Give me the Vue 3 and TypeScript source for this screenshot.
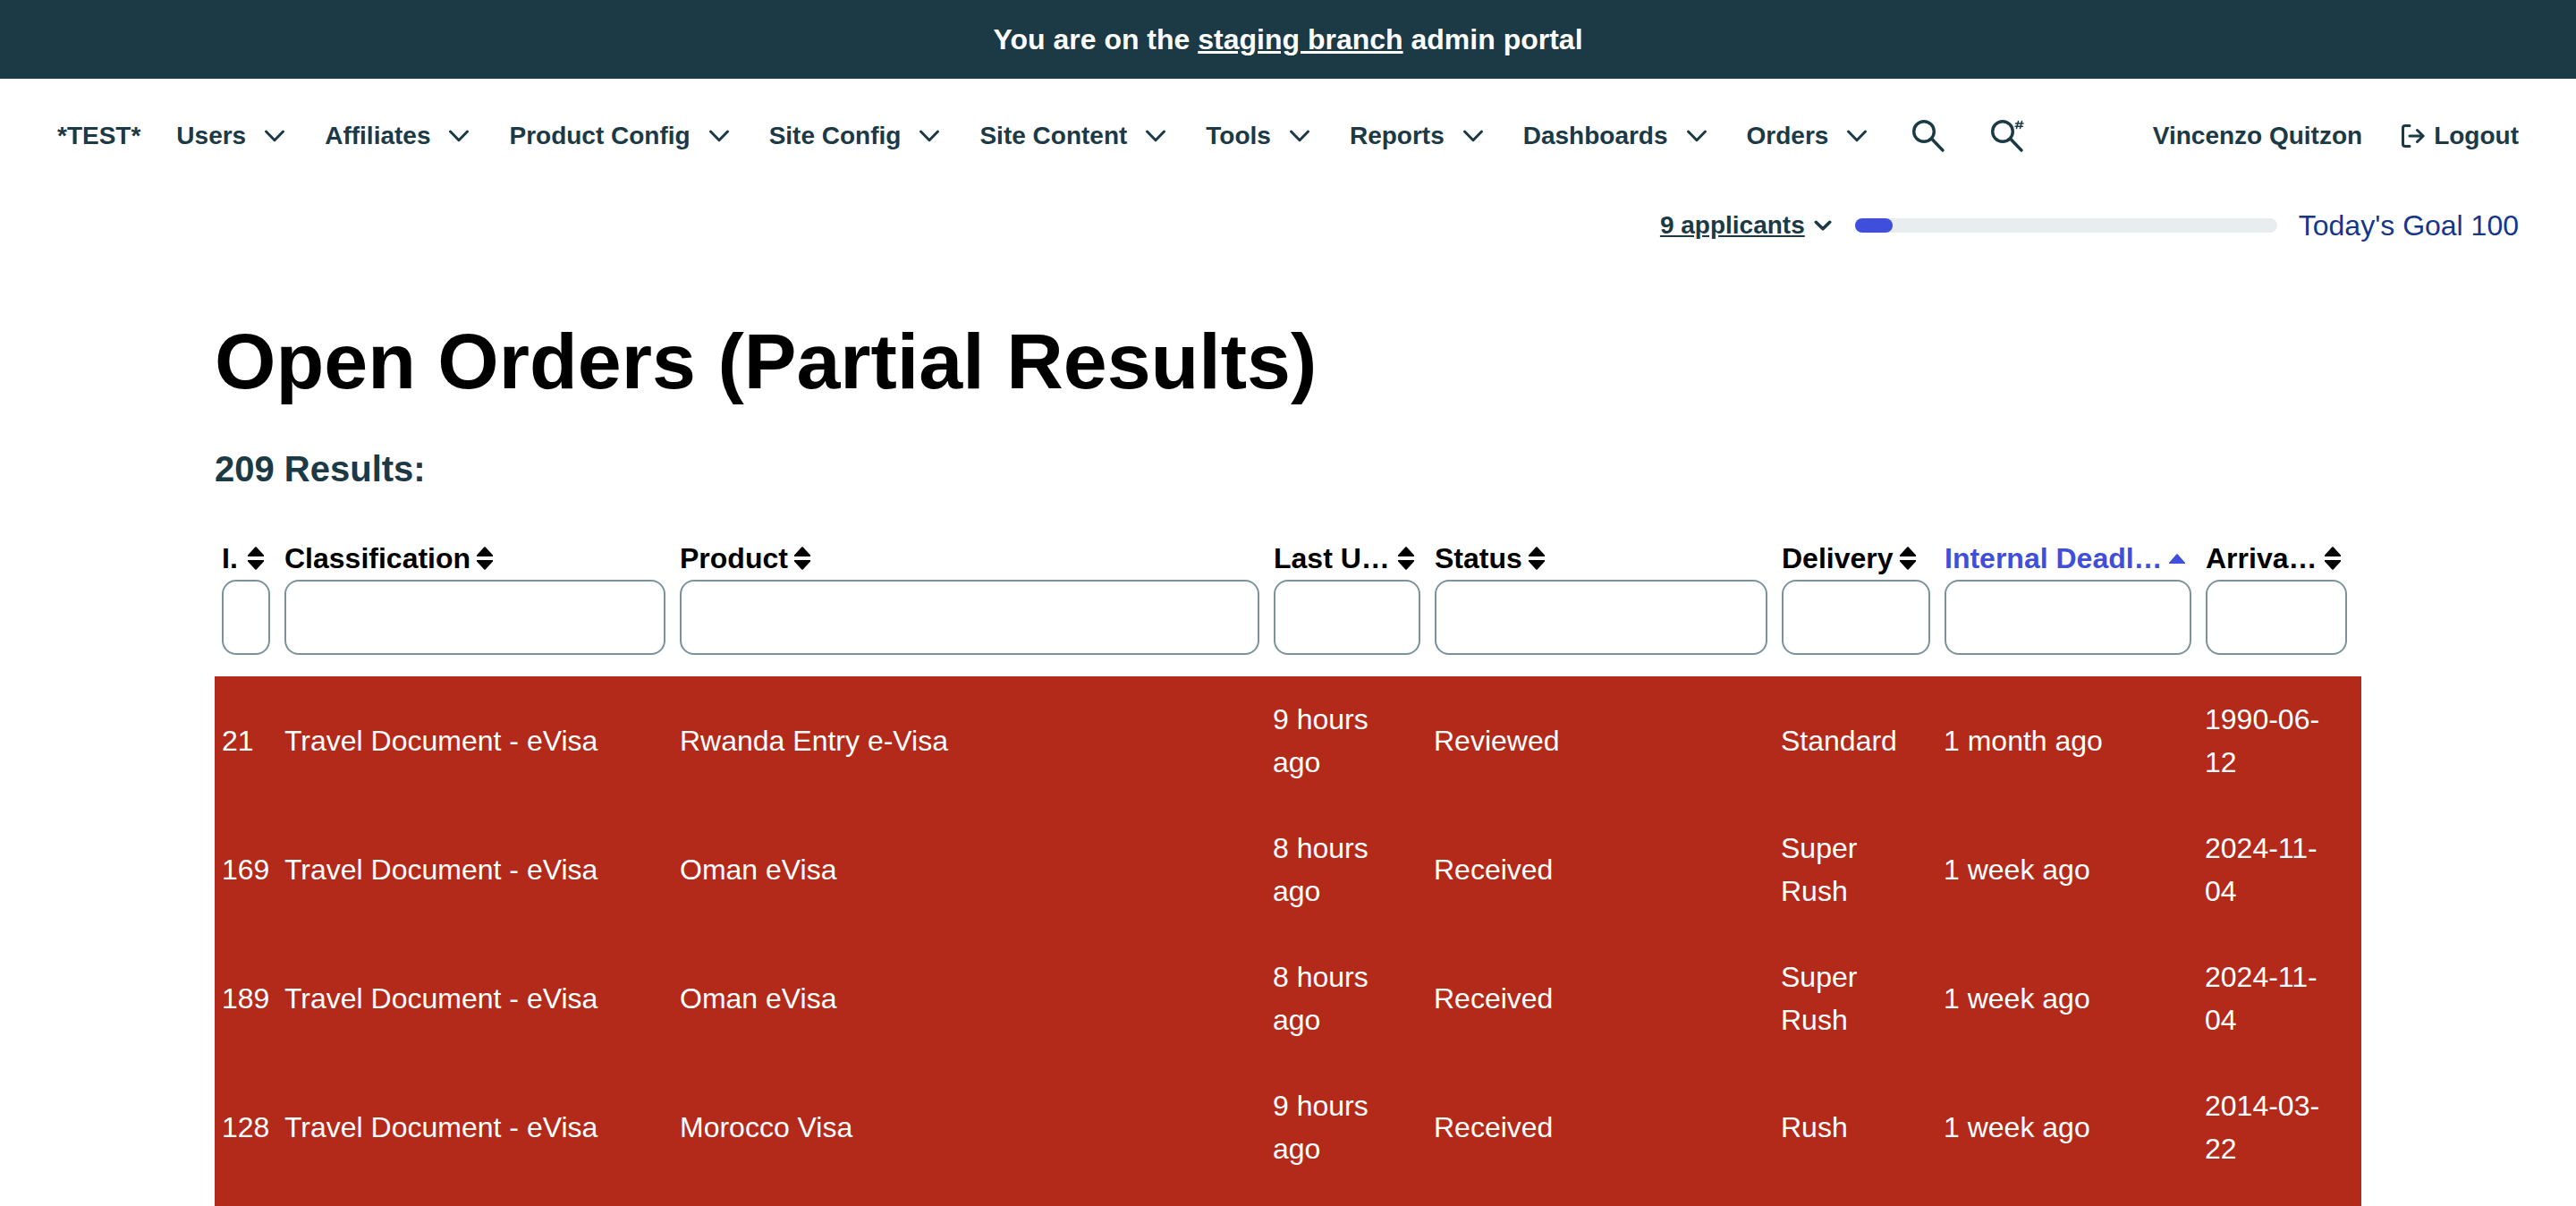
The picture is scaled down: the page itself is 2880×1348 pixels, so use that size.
<script setup lang="ts">
import { ref } from 'vue'

interface Column {
  key: string
  label: string
  width: number
  clipped?: boolean
  sorted?: boolean
}

interface Order {
  id: number
  cells: string[]
}

const menus: string[] = [
  'Users',
  'Affiliates',
  'Product Config',
  'Site Config',
  'Site Content',
  'Tools',
  'Reports',
  'Dashboards',
  'Orders',
]

const columns: Column[] = [
  { key: 'id', label: 'I.', width: 70, clipped: true },
  { key: 'classification', label: 'Classification', width: 442 },
  { key: 'product', label: 'Product', width: 664 },
  { key: 'updated', label: 'Last U…', width: 180, clipped: true },
  { key: 'status', label: 'Status', width: 388 },
  { key: 'delivery', label: 'Delivery', width: 182 },
  { key: 'deadline', label: 'Internal Deadl…', width: 292, clipped: true, sorted: true },
  { key: 'arrival', label: 'Arriva…', width: 182, clipped: true },
]

const orders: Order[] = [
  { id: 21, cells: ['Travel Document - eVisa', 'Rwanda Entry e-Visa', '9 hours ago', 'Reviewed', 'Standard', '1 month ago', '1990-06-12'] },
  { id: 169, cells: ['Travel Document - eVisa', 'Oman eVisa', '8 hours ago', 'Received', 'Super Rush', '1 week ago', '2024-11-04'] },
  { id: 189, cells: ['Travel Document - eVisa', 'Oman eVisa', '8 hours ago', 'Received', 'Super Rush', '1 week ago', '2024-11-04'] },
  { id: 128, cells: ['Travel Document - eVisa', 'Morocco Visa', '9 hours ago', 'Received', 'Rush', '1 week ago', '2014-03-22'] },
]

const goal = 100
const done = 9
const filters = ref<Record<string, string>>({})
</script>

<template>
  <div class="page">
    <div class="banner">
      <p>You are on the <a href="#">staging branch</a> admin portal</p>
    </div>

    <header>
      <nav class="nav" aria-label="Main">
        <a class="nav-item brand" href="#">*TEST*</a>
        <button v-for="menu in menus" :key="menu" class="nav-item menu" type="button">
          {{ menu }}
          <svg class="chevron" viewBox="0 0 24 24" aria-hidden="true"><path d="M2.500 7L12 16.700L21.500 7" /></svg>
        </button>
        <button class="icon-button" type="button" aria-label="Search">
          <svg viewBox="0 0 36 36" aria-hidden="true">
            <circle cx="13" cy="13" r="11.300" />
            <path d="M21.500 21L34 34" />
          </svg>
        </button>
        <button class="icon-button" type="button" aria-label="Search by number">
          <svg viewBox="0 0 36 36" aria-hidden="true">
            <circle cx="13" cy="13" r="11.300" />
            <path d="M21.500 21L34 34" />
            <path class="hash" d="M30.500 1.500L28.500 9.500M34.500 1.500L32.500 9.500M27.500 4H36M27 7.200H35.300" />
          </svg>
        </button>
        <a class="nav-item user" href="#">Vincenzo Quitzon</a>
        <a class="nav-item logout" href="#">
          <svg viewBox="0 0 26 26" aria-hidden="true">
            <path d="M9 1.500H4Q1.500 1.500 1.500 4V22Q1.500 24.500 4 24.500H9M9 13H24M17.500 6.500L24.200 13L17.500 19.500" />
          </svg>
          Logout
        </a>
      </nav>

      <div class="goal-row">
        <button class="applicants" type="button">
          <span>{{ done }} applicants</span>
          <svg viewBox="0 0 20 20" aria-hidden="true"><path d="M2.300 6.300L10 13.800L17.700 6.300" /></svg>
        </button>
        <div class="track" role="progressbar" aria-label="Today's Goal" :aria-valuenow="done" :aria-valuemax="goal">
          <div class="fill" :style="{ width: (done / goal) * 100 + '%' }"></div>
        </div>
        <span class="goal">Today's Goal {{ goal }}</span>
      </div>
    </header>

    <main>
      <h1>Open Orders (Partial Results)</h1>
      <h2>209 Results:</h2>
      <table>
        <colgroup>
          <col v-for="c in columns" :key="c.key" :style="{ width: c.width + 'px' }" />
        </colgroup>
        <thead>
          <tr>
            <th v-for="c in columns" :key="c.key" scope="col">
              <label class="sort" :class="{ clipped: c.clipped, sorted: c.sorted }" :for="'filter-' + c.key">
                <span>{{ c.label }}</span>
                <svg viewBox="0 0 18 26" aria-hidden="true">
                  <path v-if="c.sorted" d="M8.500 8.300H9.500L18 18V19H0V18z" />
                  <path v-else d="M8.500 0.300H9.500L18 9.500V11H0V9.500zM8.500 25.700H9.500L18 16.500V15H0V16.500z" />
                </svg>
              </label>
              <input :id="'filter-' + c.key" v-model="filters[c.key]" type="text" />
            </th>
          </tr>
        </thead>
        <tbody>
          <tr v-for="order in orders" :key="order.id">
            <td>{{ order.id }}</td>
            <td v-for="(cell, i) in order.cells" :key="i">{{ cell }}</td>
          </tr>
        </tbody>
      </table>
      <div class="remainder"></div>
    </main>
  </div>
</template>

<style>
body {
  margin: 0;
  background: #fff;
}
</style>

<style scoped>
.page {
  display: flex;
  flex-direction: column;
  min-height: 100vh;
  font-family: 'Liberation Sans', Arial, sans-serif;
  font-size: 32px;
  line-height: 48px;
  color: #1c3946;
}

a {
  color: inherit;
}

button {
  padding: 0;
  border: 0;
  background: none;
  color: inherit;
  font: inherit;
  cursor: pointer;
}

svg {
  flex: none;
  fill: none;
  stroke: currentColor;
  stroke-linecap: round;
  stroke-linejoin: round;
}

.banner {
  padding: 20px 64px;
  background: #1c3946;
  color: #fff;
  font-weight: 700;
  text-align: center;
}

.banner p {
  margin: 0;
}

.nav {
  display: flex;
  align-items: center;
  height: 128px;
  padding: 0 64px;
}

.nav-item {
  display: flex;
  align-items: center;
  font-size: 28px;
  font-weight: 700;
  text-decoration: none;
  white-space: nowrap;
}

.brand {
  margin-right: 40px;
}

.menu {
  gap: 20px;
  margin-right: 44px;
}

.chevron {
  width: 24px;
  height: 24px;
  stroke-width: 3;
}

.icon-button {
  display: flex;
  margin: 0 46px 0 6px;
}

.icon-button svg {
  width: 36px;
  height: 36px;
  stroke-width: 3.4;
  overflow: visible;
}

.icon-button .hash {
  stroke-width: 1.5;
}

.user {
  margin-left: auto;
}

.logout {
  gap: 10px;
  margin-left: 44px;
}

.logout svg {
  width: 26px;
  height: 26px;
  stroke-width: 3;
}

.goal-row {
  display: flex;
  align-items: center;
  justify-content: flex-end;
  height: 72px;
  padding: 0 64px;
}

.applicants {
  display: flex;
  align-items: center;
  gap: 10px;
  margin-right: 26px;
  font-size: 28px;
  font-weight: 700;
}

.applicants span {
  text-decoration: underline;
}

.applicants svg {
  width: 20px;
  height: 20px;
  stroke-width: 3.6;
}

.track {
  width: 472px;
  height: 16px;
  margin-right: 24px;
  border-radius: 8px;
  background: #e8edef;
}

.fill {
  height: 100%;
  border-radius: 8px;
  background: #3f4fdb;
}

.goal {
  color: #15368b;
}

main {
  display: flex;
  flex: 1;
  flex-direction: column;
  padding: 64px 240px 0;
}

h1 {
  margin: 0 0 44px;
  color: #000;
  font-size: 88px;
  line-height: 104px;
}

h2 {
  margin: 0 0 52px;
  font-size: 40px;
  line-height: 48px;
}

table {
  width: 100%;
  table-layout: fixed;
  border-collapse: collapse;
}

th {
  padding: 0 8px 24px;
  color: #000;
  text-align: left;
}

th:last-child {
  padding-right: 16px;
}

.sort {
  display: flex;
  align-items: center;
  gap: 7px;
  padding-right: 7px;
  white-space: nowrap;
}

.sort svg {
  width: 18px;
  height: 26px;
  fill: currentColor;
  stroke: none;
}

.clipped {
  justify-content: space-between;
}

.sorted {
  color: #3f4fdb;
}

input {
  display: block;
  box-sizing: border-box;
  width: 100%;
  height: 84px;
  padding: 0 16px;
  border: 2px solid #7c929b;
  border-radius: 16px;
  background: #fff;
  color: inherit;
  font: inherit;
}

tbody,
.remainder {
  background: #b32a1b;
  color: #fff;
}

.remainder {
  flex: 1;
}

td {
  padding: 24px 8px;
}

td:nth-child(n + 4) {
  padding-left: 7px;
}

td:last-child {
  padding-right: 24px;
}
</style>
